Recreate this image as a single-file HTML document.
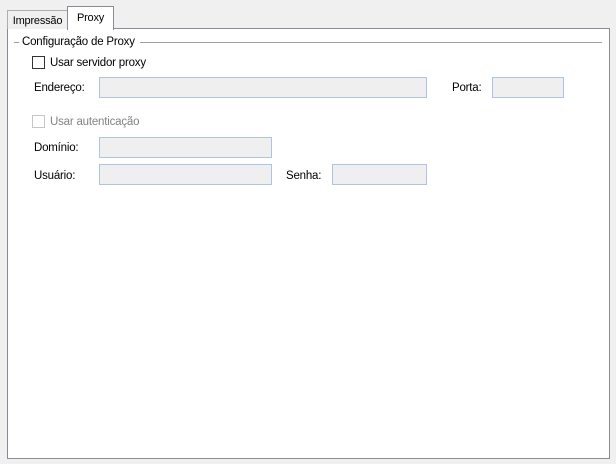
<!DOCTYPE html><html><head><style>
body{margin:0;width:616px;height:464px;background:#f0f0f0;font-family:"Liberation Sans",sans-serif;font-size:11.5px;letter-spacing:-0.2px;color:#000;position:relative;overflow:hidden}
.a{position:absolute}
.panel{left:7px;top:28px;width:601px;height:429px;background:#fff;border:1px solid #898c95}
.tab{border:1px solid #adadad;border-bottom:none;background:#f0f0f0;font-size:11px;text-align:center}
.tb{background:#efefef;border:1px solid #aec4e0;box-sizing:border-box}
.cb{width:13px;height:13px;box-sizing:border-box;border:1px solid #333;background:#fff}
</style></head><body>
<div class="a panel"></div>
<div class="a tab" style="left:7px;top:10px;width:59px;height:18px;line-height:20px">Impressão</div>
<div class="a tab" style="left:67px;top:6px;width:45px;height:23px;background:#fff;border-color:#898c95;line-height:23px">Proxy</div>
<div class="a" style="left:14px;top:42px;width:5px;height:1px;background:#a0a0a0"></div>
<div class="a" style="left:140px;top:42px;width:462px;height:1px;background:#a0a0a0"></div>
<div class="a" style="left:22px;top:36px">Configuração de Proxy</div>
<div class="a cb" style="left:32px;top:56px"></div>
<div class="a" style="left:50px;top:57px">Usar servidor proxy</div>
<div class="a" style="left:34px;top:82px">Endereço:</div>
<div class="a tb" style="left:99px;top:77px;width:328px;height:21px"></div>
<div class="a" style="left:452px;top:82px">Porta:</div>
<div class="a tb" style="left:492px;top:77px;width:72px;height:21px"></div>
<div class="a cb" style="left:32px;top:115px;border-color:#c6c6c6"></div>
<div class="a" style="left:50px;top:116px;color:#838383">Usar autenticação</div>
<div class="a" style="left:34px;top:142px">Domínio:</div>
<div class="a tb" style="left:99px;top:137px;width:173px;height:21px"></div>
<div class="a" style="left:34px;top:170px">Usuário:</div>
<div class="a tb" style="left:99px;top:164px;width:173px;height:21px"></div>
<div class="a" style="left:286px;top:170px">Senha:</div>
<div class="a tb" style="left:332px;top:164px;width:95px;height:21px"></div>
</body></html>
